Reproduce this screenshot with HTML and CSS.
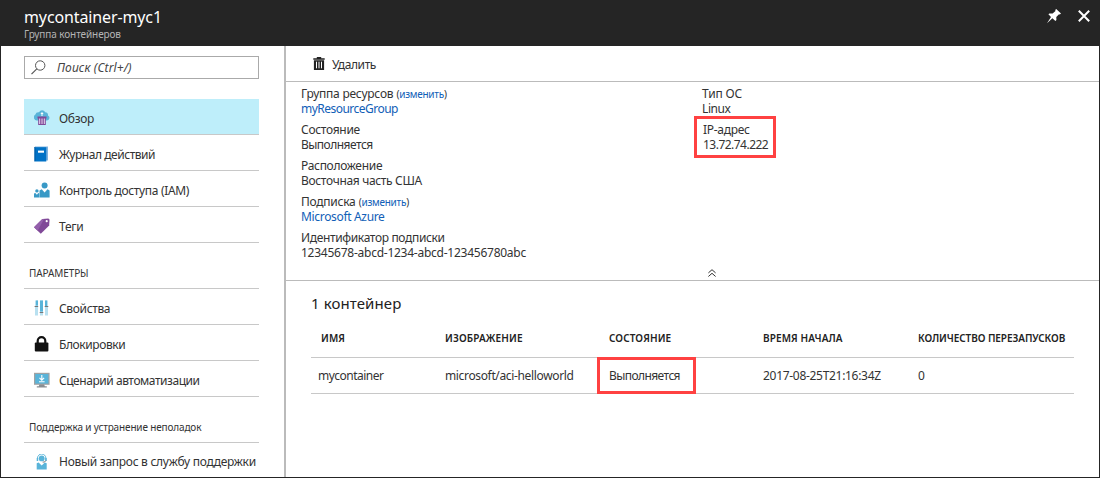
FILE: index.html
```html
<!DOCTYPE html>
<html lang="ru">
<head>
<meta charset="utf-8">
<title>mycontainer-myc1</title>
<link rel="stylesheet" href="styles.css">
</head>
<body>
<div class="blade">
  <header class="header">
    <div class="titles">
      <h1 class="title"><span>mycontainer-myc1</span></h1>
      <div class="subtitle"><span>Группа контейнеров</span></div>
    </div>
    <div class="window-actions">
      <svg class="pin" width="14" height="15" viewBox="0 0 14 15"><path d="M9.2 0 14 4.6 12.8 5.6 12 5.2 9.3 8 9.4 11 8.4 12 5.4 9.2 0 14.3 4 8 1.4 5.3 2.4 4.5 5.6 4.6 8.5 1.9 8.2 1z" fill="#fff"/></svg>
      <svg class="close" width="12" height="12" viewBox="0 0 12 12"><path d="M.8.8 11.2 11.2M11.2.8.8 11.2" stroke="#fff" stroke-width="2"/></svg>
    </div>
  </header>
  <div class="body">
    <nav class="menu">
      <div class="search">
        <svg width="15" height="15" viewBox="0 0 15 15"><circle cx="9.2" cy="5.5" r="4.7" fill="none" stroke="#555"/><path d="M5.8 8.9.5 14.2" stroke="#555" stroke-width="1.2"/></svg>
        <span class="placeholder">Поиск (Ctrl+/)</span>
      </div>
      <div class="item active">
        <svg width="16" height="16" viewBox="0 0 16 16"><path d="M3.6 10.5A3.2 3.2 0 0 1 1.4 4.6 3.2 3.2 0 0 1 5 2.2 3.4 3.4 0 0 1 11.2 2.2 3 3 0 0 1 14 5.4 2.7 2.7 0 0 1 13 10.5z" fill="#59b4d9"/><path d="M7.5 6V4H6.4L8 2 9.6 4H8.5V6z" fill="#fff"/><path d="M3.5 6.5h9v2h-.7V15H4.2V8.5h-.7z" fill="#804998"/><path d="M5.7 8.5V14M8 8.5V14M10.3 8.5V14" stroke="#eadcf0" stroke-width="1"/></svg>
        <span class="t1">Обзор</span>
      </div>
      <div class="item">
        <svg width="16" height="16" viewBox="0 0 16 16"><path d="M2 .5h12v14H2z" fill="#7fb2df"/><path d="M.5 1.2h11.8v14.3H.5z" fill="#0072c6"/><path d="M.5 1.2 1.5.3v14.5l-1 .7z" fill="#0058a0"/><path d="M4 4.6h6v2.1H4z" fill="#fff"/></svg>
        <span class="t2">Журнал действий</span>
      </div>
      <div class="item">
        <svg width="16" height="16" viewBox="0 0 16 16" fill="#3999c6"><circle cx="10.6" cy="3.4" r="3"/><path d="M5.5 15.5V8.6L7.7 7.3 10.6 10.4 13.5 7.3 15.6 8.6V15.5z"/><circle cx="2.9" cy="8.9" r="1.7"/><path d="M0 15.5v-4L1.3 11l1.6 1.7L4.3 11l1 .5v4z"/></svg>
        <span class="t3">Контроль доступа (IAM)</span>
      </div>
      <div class="item">
        <svg width="16" height="16" viewBox="0 0 16 16"><path d="M0 9.3 8.3 1 14.4.5 15.5 1.5 15.2 7.5 6.8 15.7z" fill="#804998"/><path d="M0 9.3 8.3 1 10 .9 3.7 12.8z" fill="#935fab"/><circle cx="12.7" cy="3.2" r="1.1" fill="#fff"/></svg>
        <span class="t4">Теги</span>
      </div>
      <div class="section"><span class="t5">ПАРАМЕТРЫ</span></div>
      <div class="item">
        <svg width="16" height="16" viewBox="0 0 16 16"><path d="M1 .5h3v15H1zM6 .5h3v15H6zM11 .5h3v15h-3z" fill="#b8e0f0"/><path d="M2 .5h2v5H2zM6 .5h3v11H6zM11 .5h2v6h-2z" fill="#59b4d9"/><path d="M.6 6.5h3.6M5.7 12.5h3.6M10.7 6.5h3.6" stroke="#777"/></svg>
        <span class="t6">Свойства</span>
      </div>
      <div class="item">
        <svg width="16" height="16" viewBox="0 0 16 16"><path d="M3.7 8V5a3.8 3.8 0 0 1 7.6 0v3" fill="none" stroke="#111" stroke-width="2.2"/><rect x=".8" y="6.6" width="13.6" height="9" rx="1" fill="#111"/></svg>
        <span class="t7">Блокировки</span>
      </div>
      <div class="item">
        <svg width="16" height="16" viewBox="0 0 16 16"><path d="M5.5 12h4.6l.7 2.2h2V15.5H2.8v-1.3h2z" fill="#8a8d91"/><path d="M0 .8h15.6v12H0z" fill="#a0a1a2"/><path d="M1.2 2h13.2v9.6H1.2z" fill="#59b4d9"/><path d="M7.8 3v5M5.5 5.8l2.3 2.4 2.3-2.4M5 9.8h5.6" fill="none" stroke="#fff" stroke-width="1.1"/></svg>
        <span class="t8">Сценарий автоматизации</span>
      </div>
      <div class="section"><span class="t9">Поддержка и устранение неполадок</span></div>
      <div class="item last">
        <svg width="16" height="16" viewBox="0 0 16 16"><circle cx="7.7" cy="4.4" r="2.9" fill="#59b4d9"/><path d="M3.5 6V4.2a4.2 4.2 0 0 1 8.4 0V6" fill="none" stroke="#59b4d9" stroke-width="1"/><path d="M2.7 4h1.5v3H2.7zM11.2 4h1.5v3h-1.5z" fill="#59b4d9"/><path d="M12 6.5Q11.5 8.3 8.7 8.2" fill="none" stroke="#666" stroke-width=".8"/><path d="M2.7 15.6V9.2L4.6 8.6 7.7 11.4 10.8 8.6 12.7 9.2V15.6z" fill="#59b4d9"/></svg>
        <span class="t10">Новый запрос в службу поддержки</span>
      </div>
    </nav>
    <main class="content">
      <div class="toolbar">
        <svg width="12" height="14" viewBox="0 0 12 14"><path d="M.3 1.2h3.5V0h4.4v1.2h3.5v1.5H.3zM.9 3.3h10.2V13H.9z" fill="#222"/><path d="M3.5 4.7v6.6M6 4.7v6.6M8.5 4.7v6.6" stroke="#fff" stroke-width="1"/></svg>
        <span class="u1">Удалить</span>
      </div>
      <section class="essentials">
        <div class="facts">
          <div class="col">
            <div class="fact"><div><span class="f1">Группа ресурсов</span> <span class="small">(<a>изменить</a>)</span></div><div><a class="f2">myResourceGroup</a></div></div>
            <div class="fact"><div><span class="f3">Состояние</span></div><div><span class="f4">Выполняется</span></div></div>
            <div class="fact"><div><span class="f5">Расположение</span></div><div><span class="f6">Восточная часть США</span></div></div>
            <div class="fact"><div><span class="f7">Подписка</span> <span class="small">(<a>изменить</a>)</span></div><div><a class="f8">Microsoft Azure</a></div></div>
            <div class="fact"><div><span class="f9">Идентификатор подписки</span></div><div><span class="f10">12345678-abcd-1234-abcd-123456780abc</span></div></div>
          </div>
          <div class="col">
            <div class="fact"><div><span class="g1">Тип ОС</span></div><div><span class="g2">Linux</span></div></div>
            <div class="fact marked"><div><span class="g3">IP-адрес</span></div><div><span class="g4">13.72.74.222</span></div></div>
          </div>
        </div>
        <svg class="collapse" width="8" height="8" viewBox="0 0 8 8"><path d="M.4 3.9 4 .7 7.6 3.9M.4 7.5 4 4.3 7.6 7.5" fill="none" stroke="#333"/></svg>
      </section>
      <section class="containers">
        <h2 class="count"><span>1 контейнер</span></h2>
        <div class="row head"><span class="first"><b>ИМЯ</b></span><span><b>ИЗОБРАЖЕНИЕ</b></span><span><b>СОСТОЯНИЕ</b></span><span><b>ВРЕМЯ НАЧАЛА</b></span><span><b class="restarts">КОЛИЧЕСТВО ПЕРЕЗАПУСКОВ</b></span></div>
        <div class="row"><span class="first"><i class="r1">mycontainer</i></span><span><i class="r2">microsoft/aci-helloworld</i></span><span class="marked-cell"><i class="r3">Выполняется</i></span><span><i class="r4">2017-08-25T21:16:34Z</i></span><span><i>0</i></span></div>
      </section>
    </main>
  </div>
</div>
</body>
</html>
```
FILE: styles.css
```css
* { box-sizing: border-box; }
body { margin: 0; font-family: "Noto Sans", "Open Sans", sans-serif; font-size: 12px; color: #333; background: #fff; }
svg { flex: none; }
.blade { width: 1100px; height: 478px; display: flex; flex-direction: column; border: 1px solid #252525; border-top: 0; overflow: hidden; }
.header { height: 46px; flex: none; background: #252525; display: flex; justify-content: space-between; padding: 7px 9px 0 23px; }
.title { margin: 0; font-size: 16px; line-height: 20px; font-weight: 400; color: #fff; letter-spacing: -.12px; }
.subtitle { font-size: 10px; line-height: 14px; color: #b4b4b4; letter-spacing: -.1px; }
.window-actions { display: flex; gap: 17px; padding-top: 2px; }
.close { margin-top: 1px; }
.body { flex: 1; display: flex; min-height: 0; }
.menu { width: 285px; flex: none; border-right: 2px solid #bbb; padding: 10px 25px 0 23px; white-space: nowrap; overflow: hidden; }
.search { height: 23px; border: 1px solid #aaa; display: flex; align-items: center; gap: 11px; padding-left: 6px; margin-bottom: 20px; }
.search svg { margin-top: -1px; }
.placeholder { font-style: italic; color: #444; letter-spacing: .1px; }
.item { height: 36px; border-bottom: 1px solid #c8c8c8; display: flex; align-items: center; gap: 9px; padding: 2px 0 0 10px; }
.item span { padding-top: 1px; }
.item.active { background: #beeefa; }
.section { height: 46px; border-bottom: 1px solid #c8c8c8; padding: 22px 0 0 5px; font-size: 10px; line-height: 16px; }
.item.last { border-bottom: 0; padding-top: 1px; }
.item.last span { padding-top: 0; }
.content { flex: 1; min-width: 0; white-space: nowrap; }
.toolbar { height: 36px; border-bottom: 1px solid #bbb; display: flex; align-items: center; gap: 7px; padding: 1px 0 0 27px; }
.essentials { height: 199px; border-bottom: 1px solid #bbb; display: flex; flex-direction: column; justify-content: space-between; padding: 4px 0 3px 15px; }
.facts { display: grid; grid-template-columns: 401px 1fr; line-height: 15px; }
.fact > div { height: 15px; }
.col { display: flex; flex-direction: column; gap: 6px; align-items: flex-start; }
.small { font-size: 10px; line-height: 1; letter-spacing: -.25px; }
a { color: #1160b7; }
.marked { border: 3px solid #ff4141; width: 82px; height: 42px; margin: -6px 0 0 -8px; padding: 3px 0 0 6px; }
.collapse { margin-left: 407px; }
.containers { padding: 11px 25px 0 25px; }
.count { margin: 0; font-size: 15px; line-height: 22px; font-weight: 400; color: #222; letter-spacing: .1px; }
.row { display: grid; grid-template-columns: 134px 164px 154px 155px 1fr; align-items: center; height: 36px; border-bottom: 1px solid #c8c8c8; line-height: 16px; padding-top: 1px; }
.row i { font-style: normal; }
.row .first { padding-left: 7px; }
.head { height: 44px; font-size: 10px; color: #222; padding-top: 4px; letter-spacing: .12px; }
.head b { font-weight: 600; }
.row.head .first { padding-left: 10px; }
.restarts { letter-spacing: -.07px; }
.marked-cell { border: 3px solid #ff4141; width: 99px; height: 37px; margin: -2px 0 -1px -12px; padding: 8px 0 0 9px; }

/* Tracking per label */
.t1, .t4, .f3, .f5, .g3, .r4 { letter-spacing: -.3px; }
.t3, .f6, .f8 { letter-spacing: -.33px; }
.t2, .t8 { letter-spacing: -.45px; }
.t5 { letter-spacing: -.1px; }
.t6, .f9, .r2 { letter-spacing: -.35px; }
.t7, .u1, .g2 { letter-spacing: -.4px; }
.t9, .g1 { letter-spacing: -.15px; }
.t10 { letter-spacing: -.28px; }
.f1, .f7, .f10 { letter-spacing: -.25px; }
.f2, .f4, .g4, .r1 { letter-spacing: -.52px; }
.r3 { letter-spacing: -.58px; }
```
